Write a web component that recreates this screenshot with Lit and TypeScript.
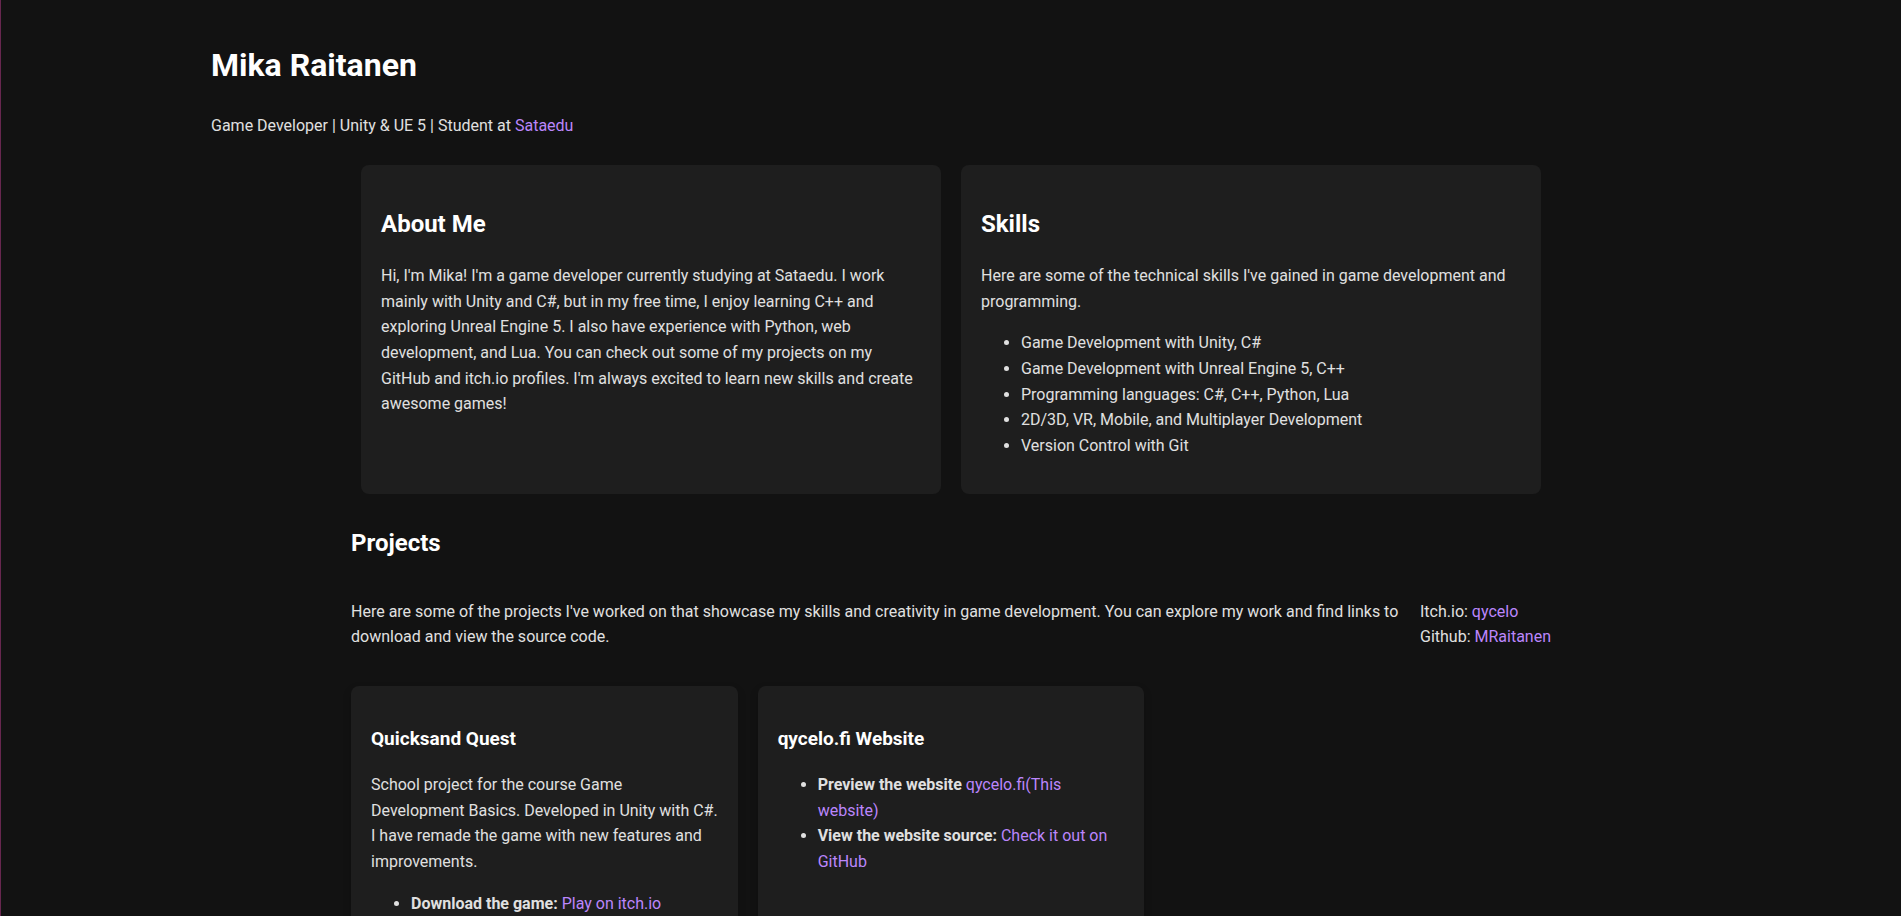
import { LitElement, html, css } from "lit";
import { customElement } from "lit/decorators.js";

@customElement("app-root")
export class AppRoot extends LitElement {
  static styles = css`
    :host {
      display: block;
      box-sizing: border-box;
      min-height: 100vh;
      border-left: 1px solid #67274f;
      background: #121212;
      color: #e0e0e0;
      font-family: Roboto, sans-serif;
      font-size: 16px;
      line-height: 1.6;
    }
    h1,
    h2,
    h3 {
      color: #ffffff;
      font-weight: 700;
    }
    h1 {
      margin: 0 0 22px;
      font-size: 32px;
    }
    h2 {
      margin: 20px 0;
      font-size: 24px;
    }
    h3 {
      margin: 18px 0;
      font-size: 19px;
    }
    p,
    ul {
      margin: 16px 0;
    }
    ul {
      padding-left: 40px;
    }
    a {
      color: #bb86fc;
      text-decoration: none;
    }
    a:hover {
      text-decoration: underline;
    }
    .header {
      box-sizing: border-box;
      width: 80%;
      margin: 0 auto;
      padding: 40px 20px 10px;
    }
    .header p {
      margin-bottom: 0;
    }
    .container {
      max-width: 1200px;
      margin: 0 auto;
    }
    .intro {
      display: flex;
      gap: 20px;
      padding: 16px 10px 10px;
    }
    .panel {
      flex: 1;
      padding: 20px;
      border-radius: 8px;
      background: #1e1e1e;
    }
    .summary {
      display: flex;
      justify-content: space-between;
      gap: 20px;
      margin-bottom: 20px;
    }
    .profiles {
      white-space: nowrap;
    }
    .projects {
      display: grid;
      grid-template-columns: repeat(3, 1fr);
      gap: 20px;
    }
    .card {
      padding: 20px 19px 20px 20px;
      border-radius: 8px;
      background: #1e1e1e;
      box-shadow: 0 4px 8px rgba(0, 0, 0, 0.2);
    }
  `;

  render() {
    return html`
      <header class="header">
        <h1>Mika Raitanen</h1>
        <p>Game Developer | Unity &amp; UE 5 | Student at <a href="#sataedu">Sataedu</a></p>
      </header>
      <main class="container">
        <div class="intro">
          <section class="panel">
            <h2>About Me</h2>
            <p>
              Hi, I'm Mika! I'm a game developer currently studying at Sataedu. I work mainly with
              Unity and C#, but in my free time, I enjoy learning C++ and exploring Unreal Engine 5.
              I also have experience with Python, web development, and Lua. You can check out some
              of my projects on my GitHub and itch.io profiles. I'm always excited to learn new
              skills and create awesome games!
            </p>
          </section>
          <section class="panel">
            <h2>Skills</h2>
            <p>
              Here are some of the technical skills I've gained in game development and programming.
            </p>
            <ul>
              <li>Game Development with Unity, C#</li>
              <li>Game Development with Unreal Engine 5, C++</li>
              <li>Programming languages: C#, C++, Python, Lua</li>
              <li>2D/3D, VR, Mobile, and Multiplayer Development</li>
              <li>Version Control with Git</li>
            </ul>
          </section>
        </div>
        <section>
          <h2>Projects</h2>
          <div class="summary">
            <p>
              Here are some of the projects I've worked on that showcase my skills and creativity in
              game development. You can explore my work and find links to download and view the
              source code.
            </p>
            <p class="profiles">
              Itch.io: <a href="#itch">qycelo</a><br />Github: <a href="#github">MRaitanen</a>
            </p>
          </div>
          <div class="projects">
            <article class="card">
              <h3>Quicksand Quest</h3>
              <p>
                School project for the course Game Development Basics. Developed in Unity with C#. I
                have remade the game with new features and improvements.
              </p>
              <ul>
                <li><strong>Download the game:</strong> <a href="#play">Play on itch.io</a></li>
              </ul>
            </article>
            <article class="card">
              <h3>qycelo.fi Website</h3>
              <ul>
                <li>
                  <strong>Preview the website</strong> <a href="#site">qycelo.fi(This website)</a>
                </li>
                <li>
                  <strong>View the website source:</strong>
                  <a href="#source">Check it out on GitHub</a>
                </li>
              </ul>
            </article>
          </div>
        </section>
      </main>
    `;
  }
}
